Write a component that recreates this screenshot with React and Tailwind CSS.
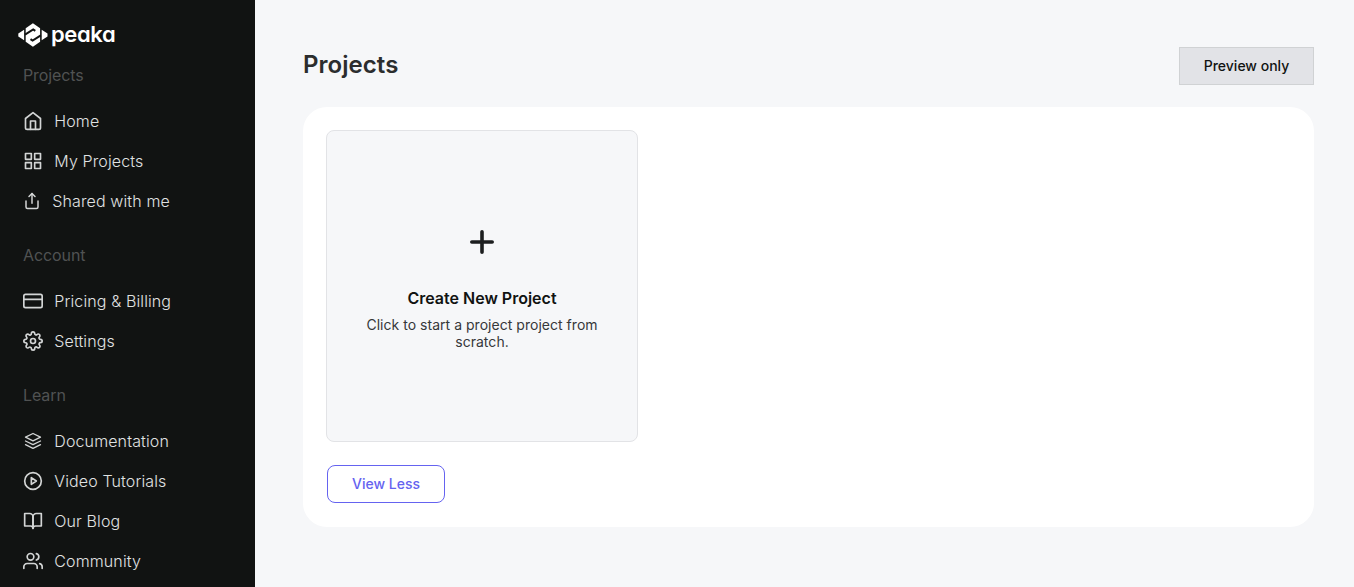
import { FiHome, FiGrid, FiShare, FiCreditCard, FiSettings, FiPlayCircle, FiBookOpen, FiUsers } from "react-icons/fi";

function LayersIcon({ size = 20 }) {
  return (
    <svg width={size} height={size} viewBox="0 0 20 20" fill="none" stroke="currentColor" strokeWidth="1.3" strokeLinecap="round" strokeLinejoin="round">
      <path d="M10 2.5 2.5 6.2 10 9.9l7.5-3.7z" />
      <path d="M2.5 10 10 13.7 17.5 10" />
      <path d="M2.5 13.7 10 17.4l7.5-3.7" />
    </svg>
  );
}

function Logo() {
  return (
    <div className="flex h-6 items-center text-white">
      <svg width="30" height="24" viewBox="0 0 30 24" fill="currentColor">
        <path d="M6.1 6.8v10.4L.3 13.4v-2.8z" />
        <path d="M23.7 6.8v10.4l5.800-3.800v-2.800z" />
        <path d="M7.7 5.3 14.9.3l7.2 5v13.400l-7.200 5-7.200-5z" />
        <path d="M7 11.6 15.2 6.4l2.1 1.4M22.8 12.4l-8.200 5.200-2.100-1.400" fill="none" stroke="#111312" strokeWidth="2" />
      </svg>
      <span className="ml-[3px] -mt-[3px] text-[22px] leading-6 font-semibold tracking-[-0.4px] [font-feature-settings:'cv11']">peaka</span>
    </div>
  );
}

const sections = [
  {
    title: "Projects",
    items: [
      { label: "Home", Icon: FiHome },
      { label: "My Projects", Icon: FiGrid },
      { label: "Shared with me", Icon: FiShare, size: 18 },
    ],
  },
  {
    title: "Account",
    items: [
      { label: "Pricing & Billing", Icon: FiCreditCard },
      { label: "Settings", Icon: FiSettings },
    ],
  },
  {
    title: "Learn",
    items: [
      { label: "Documentation", Icon: LayersIcon },
      { label: "Video Tutorials", Icon: FiPlayCircle },
      { label: "Our Blog", Icon: FiBookOpen },
      { label: "Community", Icon: FiUsers },
    ],
  },
];

function Sidebar() {
  return (
    <aside className="h-full w-[255px] shrink-0 overflow-hidden bg-[#111312] pt-[23px]">
      <div className="pl-[18px]">
        <Logo />
      </div>
      <nav className="flex flex-col gap-[21px] pt-[15px] pl-[23px]">
        {sections.map(({ title, items }) => (
          <section key={title}>
            <h2 className="mb-[13px] text-base leading-[26px] font-normal tracking-[-0.1px] text-[#505252]">{title}</h2>
            <ul>
              {items.map(({ label, Icon, size = 20 }) => (
                <li key={label} className="flex h-10 items-center gap-[11.3px] text-base font-light tracking-[0.12px] text-[#d3d5d5]">
                  <Icon size={size} />
                  <span className="text-[#e0e2e2]">{label}</span>
                </li>
              ))}
            </ul>
          </section>
        ))}
      </nav>
    </aside>
  );
}

export default function App() {
  return (
    <div className="flex h-[587px] w-full overflow-hidden bg-[#f6f7f9] font-['Inter',sans-serif]">
      <Sidebar />
      <main className="flex-1 pt-[47px] pr-10 pl-12">
        <header className="flex h-[38px] items-center justify-between">
          <h1 className="-mt-[3px] text-2xl font-semibold tracking-[0.05px] text-[#2b2d2e]">Projects</h1>
          <button className="h-[38px] w-[135px] border border-[#d0d2d4] bg-[#e2e3e7] text-sm font-medium text-[#111312]">
            Preview only
          </button>
        </header>
        <section className="mt-[22px] h-[420px] rounded-3xl bg-white px-[23px] pt-[23px]">
          <div className="flex size-[312px] flex-col items-center rounded-lg border border-[#e2e3e6] bg-[#f6f7f9] pt-[99px] text-center">
            <svg width="24" height="24" viewBox="0 0 24 24" stroke="#1c1e1f" strokeWidth="3.6" strokeLinecap="round">
              <path d="M12 1.8v20.4M1.8 12h20.4" />
            </svg>
            <h3 className="mt-8 text-base leading-6 font-semibold text-[#111312]">Create New Project</h3>
            <p className="mt-1.5 w-[250px] text-sm leading-[17px] tracking-[0.03px] text-[#36383a]">
              Click to start a project project from scratch.
            </p>
          </div>
          <button className="mt-[23px] ml-px h-[38px] w-[118px] rounded-lg border border-[#6563f0] bg-white text-sm font-medium text-[#6563f0]">
            View Less
          </button>
        </section>
      </main>
    </div>
  );
}
